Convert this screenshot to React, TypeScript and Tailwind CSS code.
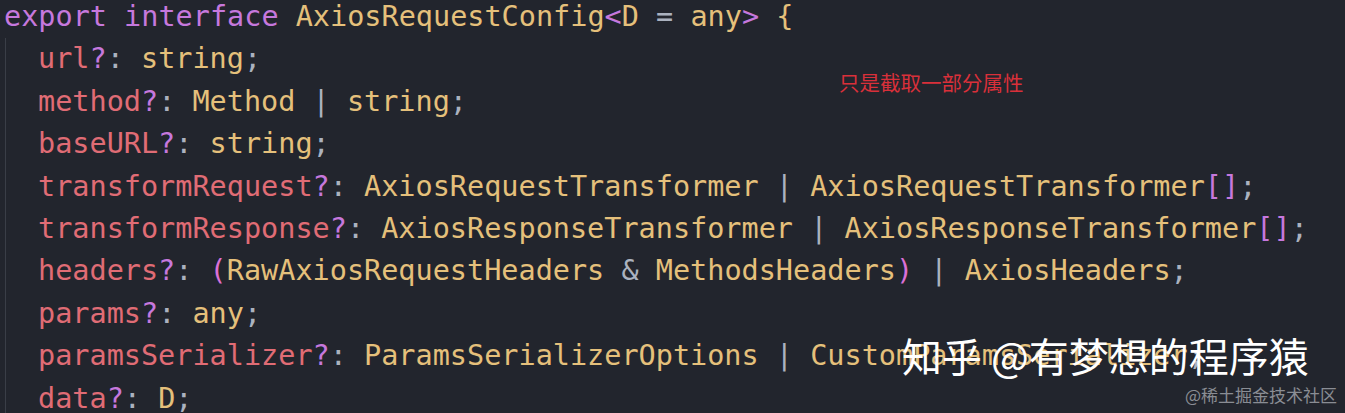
const KW = "text-[#c678dd]";
const PROP = "text-[#e06c75]";
const TYPE = "text-[#e5c07b]";
const PUNC = "text-[#abb2bf]";
const Q = "text-[#c678dd]";
const BR = "text-[#c678dd]";
const PAREN = "text-[#da70d6]";

type Tok = [string, string];

const field = (name: string, rest: Tok[]): Tok[] => [
  [name, PROP],
  ["?", Q],
  [": ", PUNC],
  ...rest,
];

const pipe: Tok = [" | ", PUNC];
const semi: Tok = [";", PUNC];

const LINES: Tok[][] = [
  field("url", [["string", TYPE], semi]),
  field("method", [["Method", TYPE], pipe, ["string", TYPE], semi]),
  field("baseURL", [["string", TYPE], semi]),
  field("transformRequest", [
    ["AxiosRequestTransformer", TYPE],
    pipe,
    ["AxiosRequestTransformer", TYPE],
    ["[]", BR],
    semi,
  ]),
  field("transformResponse", [
    ["AxiosResponseTransformer", TYPE],
    pipe,
    ["AxiosResponseTransformer", TYPE],
    ["[]", BR],
    semi,
  ]),
  field("headers", [
    ["(", PAREN],
    ["RawAxiosRequestHeaders", TYPE],
    [" & ", PUNC],
    ["MethodsHeaders", TYPE],
    [")", PAREN],
    pipe,
    ["AxiosHeaders", TYPE],
    semi,
  ]),
  field("params", [["any", TYPE], semi]),
  field("paramsSerializer", [
    ["ParamsSerializerOptions", TYPE],
    pipe,
    ["CustomParamsSerializer", TYPE],
    semi,
  ]),
  field("data", [["D", TYPE], semi]),
];

function Line({ toks }: { toks: Tok[] }) {
  return (
    <div className="h-[42.4px] leading-[42.4px] whitespace-pre">
      {toks.map(([t, c], i) => (
        <span key={i} className={c}>
          {t}
        </span>
      ))}
    </div>
  );
}

export default function App() {
  return (
    <div className="relative w-[1345px] h-[413px] overflow-hidden bg-[#22252d]">
      {/* code */}
      <div
        className="-mt-[4px] pl-[4px] text-[28.5px]"
        style={{ fontFamily: '"DejaVu Sans Mono", "Liberation Mono", monospace' }}
      >
        <Line
          toks={[
            ["export interface ", KW],
            ["AxiosRequestConfig", TYPE],
            ["<", BR],
            ["D", TYPE],
            [" = ", PUNC],
            ["any", TYPE],
            ["> ", BR],
            ["{", TYPE],
          ]}
        />
        <div className="ml-[1px] pl-[32px] border-l border-[#3a3e47]">
          {LINES.map((l, i) => (
            <Line key={i} toks={l} />
          ))}
        </div>
      </div>

      {/* annotation */}
      <div
        className="absolute left-[839px] top-[70px] text-[20.5px] leading-[24px] text-[#d9303a]"
        style={{ fontFamily: '"Noto Sans CJK SC", sans-serif' }}
      >
        只是截取一部分属性
      </div>

      {/* watermarks */}
      <div
        className="absolute left-[902px] top-[330px] text-[40px] leading-[50px] text-white"
        style={{ fontFamily: '"Noto Sans CJK SC", sans-serif' }}
      >
        知乎 @有梦想的程序猿
      </div>
      <div
        className="absolute left-[1185px] top-[384px] text-[17px] leading-[22px] text-[#8a8d94]"
        style={{ fontFamily: '"Noto Sans CJK SC", sans-serif' }}
      >
        @稀土掘金技术社区
      </div>
    </div>
  );
}
